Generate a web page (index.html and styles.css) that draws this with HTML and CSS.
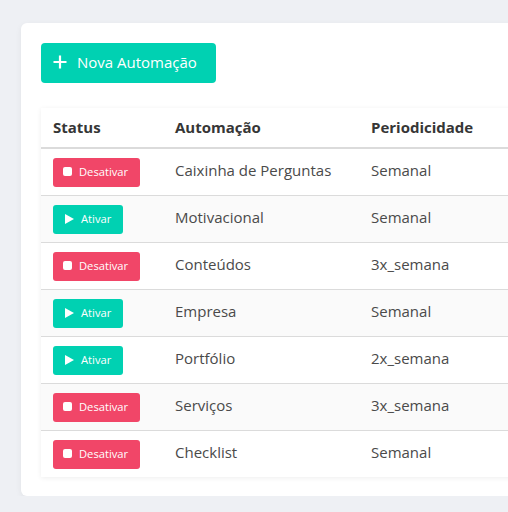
FILE: index.html
```html
<!DOCTYPE html>
<html lang="pt">
<head>
<meta charset="utf-8">
<link rel="stylesheet" href="styles.css">
</head>
<body>
<div class="page">
  <div class="card">
    <button class="btn-new">
      <svg class="plus" viewBox="0 0 14 14" width="14" height="14"><path d="M7 0.5V13.5M0.5 7H13.5" stroke="#fff" stroke-width="2.2" fill="none"/></svg>
      <span>Nova Automação</span>
    </button>
    <table class="table">
      <thead>
        <tr><th class="c1">Status</th><th class="c2">Automação</th><th class="c3">Periodicidade</th><th class="c4"></th></tr>
      </thead>
      <tbody>
        <tr><td><span class="tag off"><i class="sq"></i>Desativar</span></td><td class="txt">Caixinha de Perguntas</td><td class="txt">Semanal</td><td></td></tr>
        <tr><td><span class="tag on"><i class="tri"></i>Ativar</span></td><td class="txt">Motivacional</td><td class="txt">Semanal</td><td></td></tr>
        <tr><td><span class="tag off"><i class="sq"></i>Desativar</span></td><td class="txt">Conteúdos</td><td class="txt">3x_semana</td><td></td></tr>
        <tr><td><span class="tag on"><i class="tri"></i>Ativar</span></td><td class="txt">Empresa</td><td class="txt">Semanal</td><td></td></tr>
        <tr><td><span class="tag on"><i class="tri"></i>Ativar</span></td><td class="txt">Portfólio</td><td class="txt">2x_semana</td><td></td></tr>
        <tr><td><span class="tag off"><i class="sq"></i>Desativar</span></td><td class="txt">Serviços</td><td class="txt">3x_semana</td><td></td></tr>
        <tr><td><span class="tag off"><i class="sq"></i>Desativar</span></td><td class="txt">Checklist</td><td class="txt">Semanal</td><td></td></tr>
      </tbody>
    </table>
  </div>
</div>
</body>
</html>
```

FILE: styles.css
```css
html, body {
  margin: 0;
  padding: 0;
  background: #eef0f4;
  overflow: hidden;
  font-family: "Open Sans", "Noto Sans", sans-serif;
}
.page {
  padding: 23px 0 0 21px;
  width: 700px;
}
.card {
  background: #fff;
  border-radius: 6px;
  box-shadow: 0 2px 6px rgba(10, 10, 10, 0.06);
  padding: 20px 20px 19px;
  width: 600px;
}
.btn-new {
  display: flex;
  align-items: center;
  gap: 10px;
  height: 40px;
  width: 175px;
  padding: 0 0 2px 12px;
  border: none;
  border-radius: 4px;
  background: #00d1b2;
  color: #fff;
  font-family: inherit;
  font-size: 15px;
  cursor: pointer;
}
.plus { flex: none; }
.table {
  margin-top: 25px;
  border-collapse: collapse;
  background: #fff;
  box-shadow: 0 1px 5px rgba(10, 10, 10, 0.07);
  width: 560px;
}
.table th {
  text-align: left;
  font-weight: 700;
  color: #363636;
  font-size: 15px;
  height: 38px;
  padding: 0 12px 1px;
  border-bottom: 2px solid #dbdbdb;
}
.table td {
  height: 46px;
  padding: 0 12px;
  font-size: 15px;
  color: #4a4a4a;
  border-bottom: 1px solid #dbdbdb;
}
.table td.txt {
  height: 41px;
  padding-bottom: 5px;
}
.table tbody tr:nth-child(even) td { background: #fafafa; }
.table tbody tr:last-child td { border-bottom: none; }
.c1 { width: 98px; }
.c2 { width: 172px; }
.c3 { width: 120px; }
.tag {
  display: inline-flex;
  align-items: center;
  gap: 7px;
  height: 29px;
  padding: 0 12px 1px 10px;
  box-sizing: border-box;
  border-radius: 3px;
  color: #fff;
  font-size: 11.2px;
  vertical-align: middle;
}
.tag.off { background: #f14668; }
.tag.on { background: #00d1b2; }
.sq {
  display: block;
  width: 9px;
  height: 9px;
  background: #fff;
  border-radius: 2px;
}
.tri {
  display: block;
  width: 0;
  height: 0;
  border-left: 9px solid #fff;
  border-top: 5.5px solid transparent;
  border-bottom: 5.5px solid transparent;
  margin-left: 2px;
}
```
